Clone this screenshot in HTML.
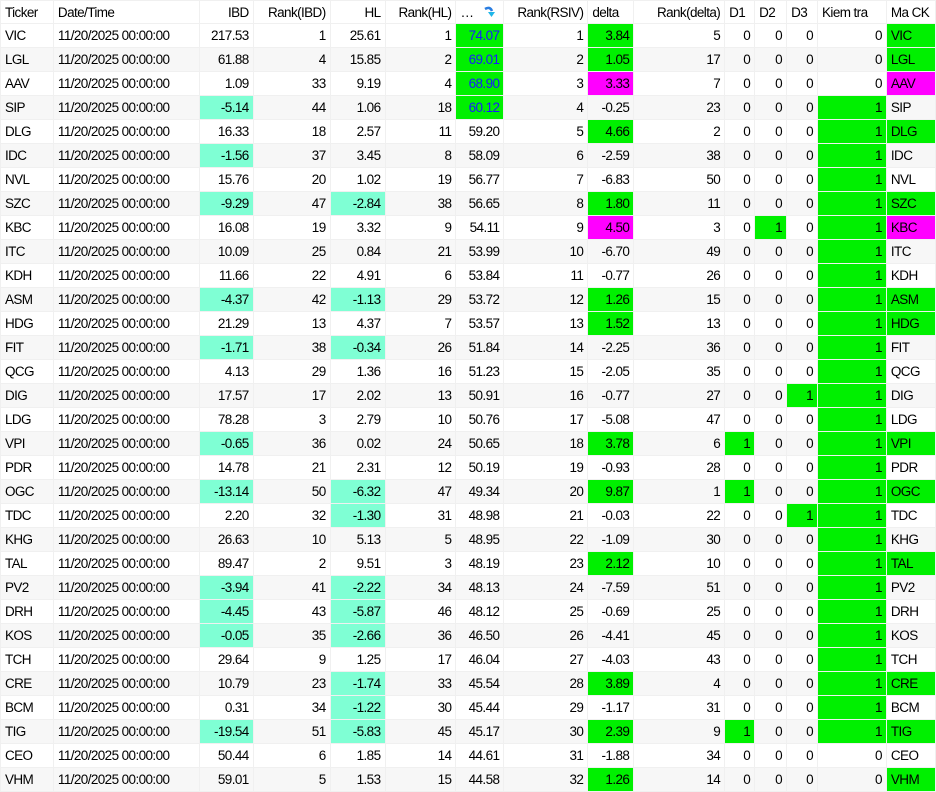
<!DOCTYPE html>
<html><head><meta charset="utf-8"><style>
body{margin:0;background:#fff;width:936px;height:791px;overflow:hidden}
table{border-collapse:collapse;table-layout:fixed;font-family:"Liberation Sans",sans-serif;font-size:13.5px;letter-spacing:-0.6px;color:#000}
td,th{border:1px solid #f0f0f0;height:23px;padding:0 4px;white-space:nowrap;overflow:hidden;text-align:right;font-weight:normal}
th{height:22px;background:#fff}
tr:nth-child(even) td{background:#f7f7f7}
td.l,th.l{text-align:left}
tr td.g{background:#00f000}
tr td.m{background:#ff00ff}
tr td.t{background:#7fffd4}
td.b{color:#1a1aff}
</style></head><body>
<table>
<colgroup><col style="width:53px"><col style="width:146px"><col style="width:54px"><col style="width:77px"><col style="width:55px"><col style="width:71px"><col style="width:48px"><col style="width:84px"><col style="width:46px"><col style="width:91px"><col style="width:30px"><col style="width:32px"><col style="width:31px"><col style="width:69px"><col style="width:49px"></colgroup>
<thead><tr><th class="l">Ticker</th><th class="l">Date/Time</th><th>IBD</th><th>Rank(IBD)</th><th>HL</th><th>Rank(HL)</th><th class="l">… <svg width="13" height="12" viewBox="0 0 13 12" style="vertical-align:-1px;margin-left:6px"><path d="M2 3 Q7 0 9 5" stroke="#2a7de1" stroke-width="2.5" fill="none"/><path d="M5 6 L12 6 L8.5 11 Z" fill="#1fb6e8"/></svg></th><th>Rank(RSIV)</th><th class="l">delta</th><th>Rank(delta)</th><th class="l">D1</th><th class="l">D2</th><th class="l">D3</th><th class="l">Kiem tra</th><th class="l">Ma CK</th></tr></thead>
<tbody id="tb"></tbody></table>
<script>
var D=[
["VIC","217.53",1,"25.61",1,"74.07G",1,"3.84g",5,0,0,0,0,"g"],
["LGL","61.88",4,"15.85",2,"69.01G",2,"1.05g",17,0,0,0,0,"g"],
["AAV","1.09",33,"9.19",4,"68.90G",3,"3.33m",7,0,0,0,0,"m"],
["SIP","-5.14t",44,"1.06",18,"60.12G",4,"-0.25",23,0,0,0,1,""],
["DLG","16.33",18,"2.57",11,"59.20",5,"4.66g",2,0,0,0,1,"g"],
["IDC","-1.56t",37,"3.45",8,"58.09",6,"-2.59",38,0,0,0,1,""],
["NVL","15.76",20,"1.02",19,"56.77",7,"-6.83",50,0,0,0,1,""],
["SZC","-9.29t",47,"-2.84t",38,"56.65",8,"1.80g",11,0,0,0,1,"g"],
["KBC","16.08",19,"3.32",9,"54.11",9,"4.50m",3,0,1,0,1,"m"],
["ITC","10.09",25,"0.84",21,"53.99",10,"-6.70",49,0,0,0,1,""],
["KDH","11.66",22,"4.91",6,"53.84",11,"-0.77",26,0,0,0,1,""],
["ASM","-4.37t",42,"-1.13t",29,"53.72",12,"1.26g",15,0,0,0,1,"g"],
["HDG","21.29",13,"4.37",7,"53.57",13,"1.52g",13,0,0,0,1,"g"],
["FIT","-1.71t",38,"-0.34t",26,"51.84",14,"-2.25",36,0,0,0,1,""],
["QCG","4.13",29,"1.36",16,"51.23",15,"-2.05",35,0,0,0,1,""],
["DIG","17.57",17,"2.02",13,"50.91",16,"-0.77",27,0,0,1,1,""],
["LDG","78.28",3,"2.79",10,"50.76",17,"-5.08",47,0,0,0,1,""],
["VPI","-0.65t",36,"0.02",24,"50.65",18,"3.78g",6,1,0,0,1,"g"],
["PDR","14.78",21,"2.31",12,"50.19",19,"-0.93",28,0,0,0,1,""],
["OGC","-13.14t",50,"-6.32t",47,"49.34",20,"9.87g",1,1,0,0,1,"g"],
["TDC","2.20",32,"-1.30t",31,"48.98",21,"-0.03",22,0,0,1,1,""],
["KHG","26.63",10,"5.13",5,"48.95",22,"-1.09",30,0,0,0,1,""],
["TAL","89.47",2,"9.51",3,"48.19",23,"2.12g",10,0,0,0,1,"g"],
["PV2","-3.94t",41,"-2.22t",34,"48.13",24,"-7.59",51,0,0,0,1,""],
["DRH","-4.45t",43,"-5.87t",46,"48.12",25,"-0.69",25,0,0,0,1,""],
["KOS","-0.05t",35,"-2.66t",36,"46.50",26,"-4.41",45,0,0,0,1,""],
["TCH","29.64",9,"1.25",17,"46.04",27,"-4.03",43,0,0,0,1,""],
["CRE","10.79",23,"-1.74t",33,"45.54",28,"3.89g",4,0,0,0,1,"g"],
["BCM","0.31",34,"-1.22t",30,"45.44",29,"-1.17",31,0,0,0,1,""],
["TIG","-19.54t",51,"-5.83t",45,"45.17",30,"2.39g",9,1,0,0,1,"g"],
["CEO","50.44",6,"1.85",14,"44.61",31,"-1.88",34,0,0,0,0,""],
["VHM","59.01",5,"1.53",15,"44.58",32,"1.26g",14,0,0,0,0,"g"]];
function c(v){v=String(v);var m=v.match(/^(.*?)([gmtG]?)$/);var cl=m[2]=="G"?"g b":m[2];return '<td class="'+cl+'">'+m[1]+'</td>';}
function f(v){return '<td'+(v?' class="g"':'')+'>'+v+'</td>';}
var h="";D.forEach(function(r){h+='<tr><td class="l">'+r[0]+'</td><td class="l">11/20/2025 00:00:00</td>'+c(r[1])+'<td>'+r[2]+'</td>'+c(r[3])+'<td>'+r[4]+'</td>'+c(r[5])+'<td>'+r[6]+'</td>'+c(r[7])+'<td>'+r[8]+'</td>'+f(r[9])+f(r[10])+f(r[11])+f(r[12])+'<td class="l '+r[13]+'">'+r[0]+'</td></tr>';});
document.getElementById("tb").innerHTML=h;
</script>
</body></html>
